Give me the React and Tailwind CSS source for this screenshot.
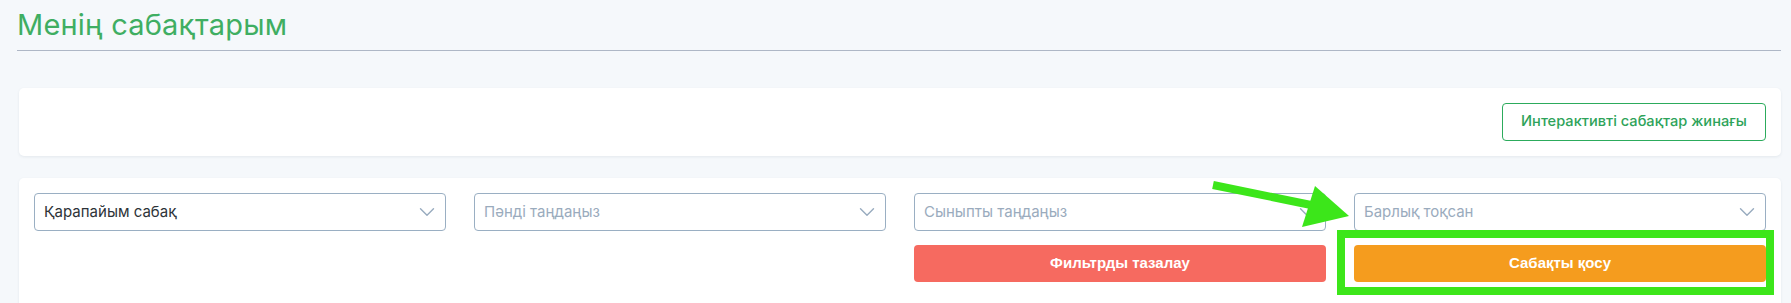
import { ChevronDown } from 'lucide-react';

const Select = ({ value, placeholder }) => (
    <div className="h-[38px] flex items-center justify-between pl-[9px] pr-[5px] rounded-[4px] border border-[#9aafc3] bg-white">
        <span className={`text-[15px] ${value ? 'text-[#2d3338]' : 'text-[#9aabbd]'}`}>
            {value || placeholder}
        </span>
        <ChevronDown className="w-[26px] h-[26px] text-[#98abbf]" strokeWidth={1.3} />
    </div>
);

const App = () => {
    return (
        <div className="relative w-[1791px] h-[303px] overflow-hidden bg-[#f5f8fb] font-['Inter',sans-serif]">
            <div className="pl-[17px] pr-[10px]">
                <div className="pt-[7px] pb-[7px] border-b border-[#aeb7c6]">
                    <h1 className="text-[29px] leading-[36px] text-[#3fae62] tracking-[0.2px]">Менің сабақтарым</h1>
                </div>

                <div className="ml-[2px] mt-[37px] h-[68px] bg-white rounded-[5px] shadow-[0_1px_3px_rgba(30,50,80,0.08)] flex items-center justify-end px-[15px]">
                    <button className="h-[38px] w-[264px] rounded-[4px] border border-[#2cab5c] text-[14.6px] font-medium text-[#2ea35a] bg-white">
                        Интерактивті сабақтар жинағы
                    </button>
                </div>

                <div className="ml-[2px] mt-[22px] h-[200px] bg-white rounded-[5px] shadow-[0_1px_3px_rgba(30,50,80,0.08)] p-[15px]">
                    <div className="grid grid-cols-4 gap-x-[28px] gap-y-[14px]">
                        <Select value="Қарапайым сабақ" />
                        <Select placeholder="Пәнді таңдаңыз" />
                        <Select placeholder="Сыныпты таңдаңыз" />
                        <Select placeholder="Барлық тоқсан" />
                        <div />
                        <div />
                        <button className="h-[37px] rounded-[4px] bg-[#f66a60] text-white text-[15px] font-bold font-['Liberation_Sans',sans-serif]">
                            Фильтрды тазалау
                        </button>
                        <button className="h-[37px] rounded-[4px] bg-[#f59c1e] text-white text-[15px] font-bold font-['Liberation_Sans',sans-serif]">
                            Сабақты қосу
                        </button>
                    </div>
                </div>
            </div>

            {/* annotation overlay */}
            <svg className="absolute left-0 top-0 pointer-events-none" width="1791" height="303">
                <line x1="1213" y1="185" x2="1316" y2="206" stroke="#3ce61a" strokeWidth="8" />
                <polygon points="1315,186 1302,227 1349,216" fill="#3ce61a" />
                <rect x="1341" y="234" width="429" height="57" fill="none" stroke="#3ce61a" strokeWidth="8" />
            </svg>
        </div>
    );
};

export default App;
